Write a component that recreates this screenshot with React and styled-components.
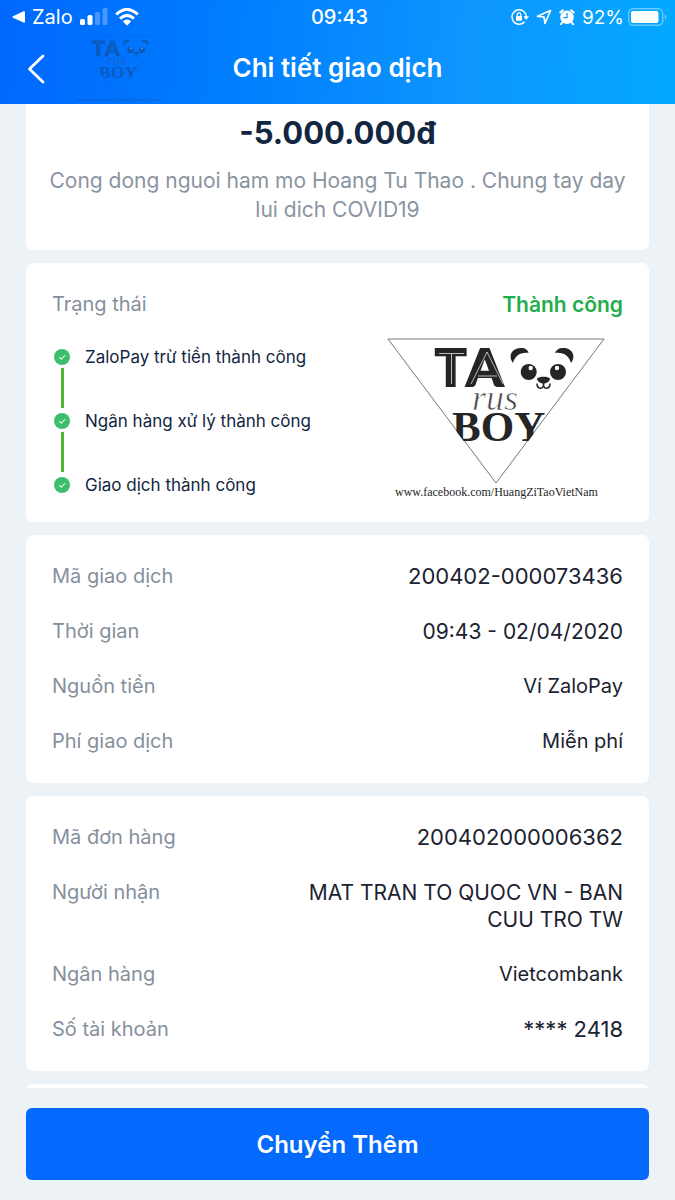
import React from "react";
import styled, { createGlobalStyle } from "styled-components";

const GlobalStyle = createGlobalStyle`
  *, *::before, *::after { box-sizing: border-box; }
  body {
    margin: 0;
    background: #edf2f6;
    color: #1d2433;
    font-family: Inter, "Liberation Sans", sans-serif;
  }
`;

const Screen = styled.div`
  display: flex;
  flex-direction: column;
  height: 100vh;
`;

const Header = styled.header`
  position: relative;
  flex: none;
  color: #fff;
  background: linear-gradient(95deg, #0067fe 0%, #0080fe 38%, #0e95fe 68%, #02a9ff 100%);
`;

const StatusBar = styled.div`
  display: grid;
  grid-template-columns: 1fr auto 1fr;
  align-items: center;
  height: 34px;
  padding: 0 8px 0 12px;
  font-size: 20px;
`;

const StatusGroup = styled.div`
  display: flex;
  align-items: center;
  justify-content: ${(p) => (p.$end ? "flex-end" : "flex-start")};
  gap: 7px;
`;

const Clock = styled.time`
  font-weight: 500;
`;

const Battery = styled.span`
  display: flex;
  align-items: center;
  gap: 4px;
  font-size: 19px;
`;

const NavBar = styled.div`
  display: grid;
  grid-template-columns: 48px 1fr 48px;
  align-items: center;
  height: 70px;
  padding: 0 12px;
`;

const BackButton = styled.button`
  display: flex;
  align-items: center;
  justify-content: center;
  height: 48px;
  padding: 0;
  border: 0;
  color: inherit;
  background: none;
`;

const Title = styled.h1`
  margin: 0;
  padding-bottom: 2px;
  font-size: 26px;
  line-height: 32px;
  font-weight: 600;
  text-align: center;
`;

const HeaderMark = styled.div`
  position: absolute;
  left: 72px;
  top: 36px;
  width: 90px;
  opacity: 0.3;
`;

const Content = styled.main`
  flex: 1;
  min-height: 0;
  display: flex;
  flex-direction: column;
  gap: 13px;
  padding: 0 26px;
  overflow-y: auto;
  scrollbar-width: none;
`;

const Card = styled.section`
  flex: none;
  padding: 28px 26px;
  border-radius: 7px;
  background: #fff;
`;

const AmountCard = styled(Card)`
  padding: 10px 20px 26px;
  border-radius: 0 0 7px 7px;
  text-align: center;
`;

const Amount = styled.p`
  margin: 0 0 14px;
  font-size: 31px;
  line-height: 38px;
  font-weight: 700;
  color: #12263f;
`;

const Description = styled.p`
  margin: 0;
  font-size: 21px;
  line-height: 29px;
  color: #8a94a0;
`;

const StatusCard = styled(Card)`
  padding-bottom: 23px;
`;

const List = styled.dl`
  display: flex;
  flex-direction: column;
  gap: 28px;
  margin: 0;
`;

const Row = styled.div`
  display: flex;
  justify-content: space-between;
  gap: 24px;
  line-height: 27px;
`;

const Label = styled.dt`
  flex: none;
  font-size: 20px;
  color: #85909c;
`;

const valueSizes = { text: "20px", wide: "21px", code: "22px" };

const Value = styled.dd`
  margin: 0;
  max-width: 320px;
  font-size: ${(p) => valueSizes[p.$kind]};
  text-align: right;
  color: ${(p) => (p.$success ? "#1fae4b" : "#1b2230")};
  font-weight: ${(p) => (p.$success ? 600 : 400)};
`;

const StatusBody = styled.div`
  display: flex;
  justify-content: space-between;
  align-items: flex-start;
  margin-top: 20px;
`;

const Steps = styled.ol`
  margin: 0;
  padding: 6px 0 0;
  list-style: none;
`;

const Step = styled.li`
  display: flex;
  gap: 13px;
  height: 64px;
  font-size: 17px;
  line-height: 27px;
  color: #12263f;

  &:last-child { height: 27px; }
`;

const Marker = styled.span`
  display: flex;
  flex-direction: column;
  align-items: center;
  gap: 3px;
  width: 20px;
  padding-top: 5px;

  svg { flex: none; }
`;

const Connector = styled.span`
  flex: 1;
  width: 3px;
  background: #50b82c;
`;

const BrandMark = styled.div`
  flex: none;
  width: 220px;
  margin-right: 17px;
`;

const Footer = styled.footer`
  flex: none;
  padding: 20px 26px;
`;

const PrimaryButton = styled.button`
  display: block;
  width: 100%;
  height: 72px;
  border: 0;
  border-radius: 6px;
  font-family: inherit;
  font-size: 24px;
  font-weight: 600;
  color: #fff;
  background: #046afe;
`;

function Logo({ line = "#777", inline = "#ccc" }) {
  return (
    <svg viewBox="0 0 220 161" width="100%" display="block" role="img" aria-label="Taurus Boy">
      <defs>
        <clipPath id="tri"><path d="M0 0H220L110 146Z" /></clipPath>
      </defs>
      <path d="M2 1H218L110 145Z" fill="none" stroke={line} strokeWidth="1" />
      <g fill="#252525">
        <text x="49" y="48" fontFamily="Lato, sans-serif" fontWeight="900" fontSize="52" stroke="#252525" strokeWidth="2" style={{ fontKerning: "none" }}>TA</text>
        <path d="M53 15.500H78M65.500 15.500V46M85 46L101 14L117 46M92 38H111" fill="none" stroke={inline} strokeWidth="0.900" />
        <path d="M127 25C121 17 127 9 136 10C139 10 142 12 142.600 15C134 14 129 18 127 25Z" />
        <path d="M185 25C191 17 185 9 176 10C173 10 170 12 169 15C178 14 183 18 185 25Z" />
        <circle cx="142.700" cy="34" r="8" />
        <circle cx="172" cy="34" r="8" />
        <circle cx="144.700" cy="30" r="2.200" fill="#fff" />
        <circle cx="171" cy="30" r="2.200" fill="#fff" />
        <path d="M151 40.500c2-2.500 11-2.500 13 0 0 3-4 5-6.500 5s-6.500-2-6.500-5z" />
        <path d="M157.500 44v3.500M151 45.500c0 6 6.500 6 6.500 1.500 0 4.500 6.500 4.500 6.500-1.500" fill="none" stroke="#252525" strokeWidth="1.600" />
        <text x="86" y="72" fontFamily="Liberation Serif, serif" fontStyle="italic" fontSize="36" fill="#444" stroke={line === "#777" ? "#fff" : "none"} strokeWidth="0.700">rus</text>
        <g clipPath="url(#tri)">
          <text x="66" y="103" fontFamily="Liberation Serif, serif" fontWeight="700" fontSize="43">BOY</text>
        </g>
        <text x="9" y="158" fontFamily="Liberation Serif, serif" fontSize="12">www.facebook.com/HuangZiTaoVietNam</text>
      </g>
    </svg>
  );
}

function CheckDot() {
  return (
    <svg width="16" height="16" viewBox="0 0 16 16" aria-hidden="true">
      <circle cx="8" cy="8" r="8" fill="#3dbe6c" />
      <path d="M5 8.200L7.300 10.200L11.200 6.200" fill="none" stroke="#dff7e8" strokeWidth="1.100" />
    </svg>
  );
}

const steps = ["ZaloPay trừ tiền thành công", "Ngân hàng xử lý thành công", "Giao dịch thành công"];

const transaction = [
  ["Mã giao dịch", "200402-000073436", "code"],
  ["Thời gian", "09:43 - 02/04/2020", "wide"],
  ["Nguồn tiền", "Ví ZaloPay", "text"],
  ["Phí giao dịch", "Miễn phí", "text"],
];

const order = [
  ["Mã đơn hàng", "200402000006362", "code"],
  ["Người nhận", "MAT TRAN TO QUOC VN - BAN CUU TRO TW", "wide"],
  ["Ngân hàng", "Vietcombank", "text"],
  ["Số tài khoản", "**** 2418", "code"],
];

function InfoCard({ rows }) {
  return (
    <Card>
      <List>
        {rows.map(([label, value, kind]) => (
          <Row key={label}>
            <Label>{label}</Label>
            <Value $kind={kind}>{value}</Value>
          </Row>
        ))}
      </List>
    </Card>
  );
}

export default function App() {
  return (
    <Screen>
      <GlobalStyle />
      <Header>
        <StatusBar>
          <StatusGroup>
            <svg width="13" height="12" viewBox="0 0 13 12" fill="#fff" aria-hidden="true">
              <path d="M1 5.200L11.500 0.300Q13 0 13 1.500V10.500Q13 12 11.500 11.600L1 6.800Q-0.500 6 1 5.200Z" />
            </svg>
            <span>Zalo</span>
            <svg width="28" height="18" viewBox="0 0 28 18" fill="#fff" aria-hidden="true">
              <rect x="0" y="11" width="5" height="6" rx="1.500" />
              <rect x="7.500" y="7" width="5" height="10" rx="1.500" />
              <rect x="15" y="4" width="5" height="13" rx="1.500" opacity=".28" />
              <rect x="22.500" y="0" width="5" height="17" rx="1.500" opacity=".28" />
            </svg>
            <svg width="24" height="18" viewBox="0 0 24 18" fill="none" stroke="#fff" strokeWidth="3" aria-hidden="true">
              <path d="M1.200 6.500Q12-3.500 22.800 6.500M5 10.600Q12 4.200 19 10.600" />
              <path d="M7.800 13.300Q12 9.600 16.200 13.300L12 17.800Z" fill="#fff" stroke="none" />
            </svg>
          </StatusGroup>
          <Clock>09:43</Clock>
          <StatusGroup $end>
            <svg width="18" height="16" viewBox="0 0 18 16" fill="none" stroke="#fff" strokeWidth="1.500" aria-hidden="true">
              <path d="M13.300 3A7.200 7.200 0 1 0 13.600 12.800M13.300 3Q15.300 5 15.300 8" />
              <path d="M12.500 7.200H18L15.200 11Z" fill="#fff" stroke="none" />
              <rect x="5" y="7" width="6" height="4.800" rx=".8" fill="#fff" stroke="none" />
              <path d="M6.200 7V5.600a1.800 1.800 0 0 1 3.600 0V7" strokeWidth="1.200" />
            </svg>
            <svg width="16" height="16" viewBox="0 0 16 16" fill="none" stroke="#fff" strokeWidth="1.700" strokeLinejoin="round" aria-hidden="true">
              <path d="M14.500 1.500L1.500 7.300L8 8L9 14.500Z" />
            </svg>
            <svg width="16" height="16" viewBox="0 0 16 16" aria-hidden="true">
              <circle cx="8" cy="8.300" r="6.700" fill="#fff" />
              <path d="M1.200 3.400L3.800 1.200M14.800 3.400L12.200 1.200M3.600 13L1.800 15.300M12.400 13L14.200 15.300" stroke="#fff" strokeWidth="2" strokeLinecap="round" />
              <path d="M8 4V8.600H4.300" fill="none" stroke="#149dff" strokeWidth="1.300" />
            </svg>
            <Battery>
              <span>92%</span>
              <svg width="39" height="18" viewBox="0 0 39 18" aria-hidden="true">
                <rect x="0.700" y="0.700" width="34" height="16.600" rx="4.500" fill="none" stroke="#fff" strokeOpacity=".4" strokeWidth="1.400" />
                <rect x="3" y="3" width="27.500" height="12" rx="2" fill="#fff" />
                <path d="M36.800 6v6q3-3 0-6z" fill="#fff" opacity=".45" />
              </svg>
            </Battery>
          </StatusGroup>
        </StatusBar>
        <NavBar>
          <BackButton aria-label="Quay lại">
            <svg width="18" height="30" viewBox="0 0 18 30" fill="none" stroke="#fff" strokeWidth="2.800" strokeLinecap="round" strokeLinejoin="round" aria-hidden="true">
              <path d="M16 2L2.500 15L16 28" />
            </svg>
          </BackButton>
          <Title>Chi tiết giao dịch</Title>
        </NavBar>
        <HeaderMark aria-hidden="true"><Logo line="#123a7a" inline="#3a6ab0" /></HeaderMark>
      </Header>

      <Content>
        <AmountCard>
          <Amount>-5.000.000đ</Amount>
          <Description>
            Cong dong nguoi ham mo Hoang Tu Thao . Chung tay day lui dich COVID19
          </Description>
        </AmountCard>

        <StatusCard>
          <List>
            <Row>
              <Label>Trạng thái</Label>
              <Value $kind="wide" $success>Thành công</Value>
            </Row>
          </List>
          <StatusBody>
            <Steps>
              {steps.map((text, i) => (
                <Step key={text}>
                  <Marker>
                    <CheckDot />
                    {i < steps.length - 1 && <Connector />}
                  </Marker>
                  {text}
                </Step>
              ))}
            </Steps>
            <BrandMark><Logo /></BrandMark>
          </StatusBody>
        </StatusCard>

        <InfoCard rows={transaction} />
        <InfoCard rows={order} />
        <Card />
      </Content>

      <Footer>
        <PrimaryButton>Chuyển Thêm</PrimaryButton>
      </Footer>
    </Screen>
  );
}
